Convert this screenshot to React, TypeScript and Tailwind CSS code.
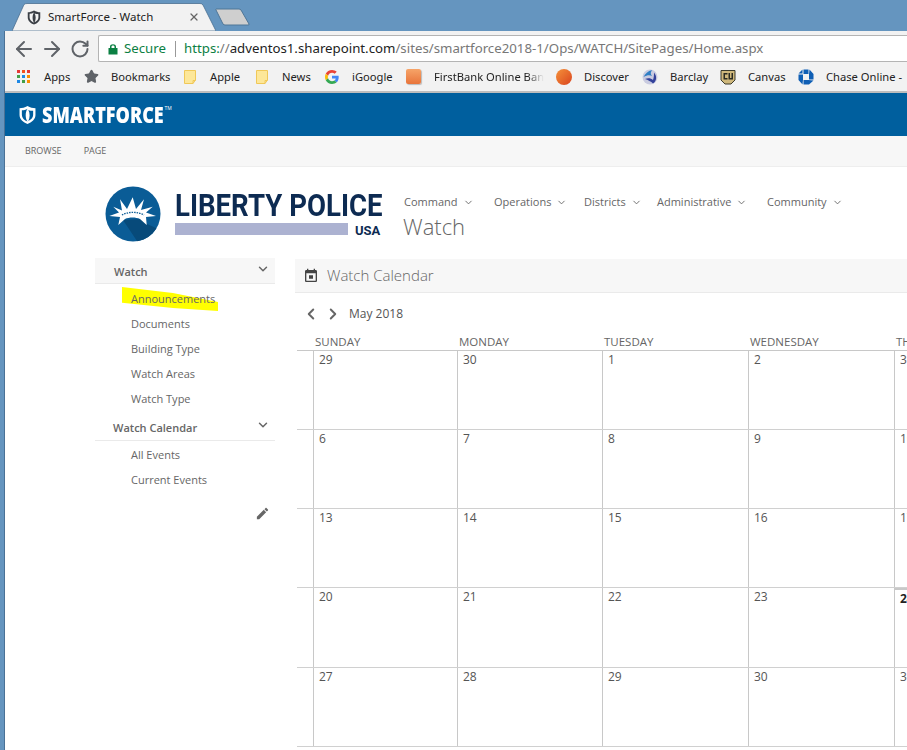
import { ArrowLeft, ArrowRight, ChevronDown, ChevronLeft, ChevronRight, RotateCw, Star, X } from "lucide-react";

const uiFont = "[font-family:'Open_Sans','Noto_Sans',sans-serif]";

function ShieldIcon({ className, fg, bg }: { className: string; fg: string; bg: string }) {
  return (
    <svg viewBox="0 0 16 18" className={className}>
      <path d="M8 0.5 C5.5 2 3 2.6 0.5 2.6 V9 C0.5 13 4 16 8 17.5 C12 16 15.5 13 15.5 9 V2.6 C13 2.6 10.5 2 8 0.5 Z" fill={fg} />
      <path d="M8 3 C6.4 3.9 4.6 4.5 2.7 4.6 V9 C2.7 11.7 5 14 8 15.2 C5.8 12 5.8 6 8 3 Z" fill={bg} />
      <path d="M8.8 4.2 C10 4.9 11.8 4.9 13.3 5 V9 C13.3 11.3 11.4 13.4 8.8 14.6 C10.4 11.5 10.4 7 8.8 4.2 Z" fill={bg} />
    </svg>
  );
}

function PageIcon() {
  return (
    <svg viewBox="0 0 12 14" className="h-[14px] w-[12px]">
      <path d="M0.5 0.5 H11.5 V10 L9 13.5 H0.5 Z" fill="#fde799" stroke="#f0c858" />
      <path d="M9 13.5 V10.5 H11.5" fill="none" stroke="#f0c858" />
    </svg>
  );
}

function AppsIcon() {
  const colors = ["#e53935", "#f4511e", "#e53935", "#43a047", "#1e88e5", "#fb8c00", "#1e88e5", "#43a047", "#fb8c00"];
  return (
    <div className="grid h-[13px] w-[13px] grid-cols-3 gap-[2px]">
      {colors.map((c, i) => (
        <span key={i} style={{ background: c }} />
      ))}
    </div>
  );
}

function GoogleIcon() {
  return (
    <svg viewBox="0 0 48 48" className="h-[14px] w-[14px]">
      <path fill="#EA4335" d="M24 9.5c3.5 0 6.7 1.2 9.2 3.6l6.9-6.9C35.9 2.4 30.5 0 24 0 14.6 0 6.5 5.4 2.6 13.2l8 6.2C12.5 13.7 17.800 9.5 24 9.5z" />
      <path fill="#4285F4" d="M46.900 24.500c0-1.600-.1-3.100-.4-4.500H24v9h12.900c-.6 3-2.200 5.500-4.800 7.200l7.700 6c4.500-4.200 7.100-10.300 7.100-17.700z" />
      <path fill="#FBBC05" d="M10.500 28.600c-.5-1.400-.8-3-.8-4.600s.3-3.200.8-4.600l-8-6.200C.9 16.400 0 20.100 0 24s.9 7.600 2.600 10.800l7.900-6.200z" />
      <path fill="#34A853" d="M24 48c6.500 0 11.900-2.100 15.900-5.800l-7.700-6c-2.100 1.400-4.900 2.300-8.200 2.300-6.200 0-11.500-4.200-13.400-9.900l-8 6.200C6.500 42.600 14.600 48 24 48z" />
    </svg>
  );
}

function FirstBankIcon() {
  return <div className="h-[15px] w-[15px] rounded-[2px] bg-gradient-to-b from-[#f6a468] to-[#e8743a] shadow-[1px_1px_1px_#bbb]" />;
}

function DiscoverIcon() {
  return <div className="h-[16px] w-[16px] rounded-full bg-gradient-to-br from-[#f4903a] to-[#d9411e]" />;
}

function BarclayIcon() {
  return (
    <svg viewBox="0 0 16 16" className="h-[16px] w-[16px]">
      <circle cx="8" cy="8" r="7.500" fill="#c9cbe0" />
      <path d="M10 1 C6 2 3 5 1.500 8 C5 6 8 6 10 7 C8 4.500 9 3 10 1 Z" fill="#2f7fc4" />
      <path d="M3 10 C6 8.500 9 9 11 11 C12 8 12 6 12 3.500 C15 7 15 12 11 14.500 C9 12.500 6 11 3 10 Z" fill="#33419a" />
    </svg>
  );
}

function CanvasIcon() {
  return (
    <svg viewBox="0 0 16 16" className="h-[16px] w-[16px]">
      <path d="M1 1.500 H15 V11 L11 15 H5 L1 11 Z" fill="#cfb87c" stroke="#3a3a2c" />
      <path d="M3.500 4 H7.500 V5.500 H5 V9 H7.500 V10.500 H3.500 Z" fill="#2b2b22" />
      <path d="M8.500 4 H10 V9 H11.500 V4 H13 V10.500 H8.500 Z" fill="#2b2b22" />
    </svg>
  );
}

function ChaseIcon() {
  return (
    <svg viewBox="0 0 16 16" className="h-[16px] w-[16px] shrink-0">
      <path d="M5.500 0.500 H10.500 V5 H5.500 Z M11.500 0.500 L15.500 5 V10.500 H11 V5 Z M15.500 11.500 L11 15.500 H5.500 V11 H10.500 Z M4.500 15.500 L0.500 11 V5.500 H5 V11 Z M0.500 4.500 L4.500 0.500 V4.500 Z" fill="#0f5fb5" />
    </svg>
  );
}

function CrownLogo() {
  return (
    <svg viewBox="0 0 56 56" className="h-[56px] w-[56px] shrink-0">
      <defs>
        <clipPath id="disc">
          <circle cx="28" cy="28" r="27.500" />
        </clipPath>
      </defs>
      <circle cx="28" cy="28" r="27.500" fill="#0a5c96" />
      <path d="M18 34 L36 33 L42 38 L60 46 L50 60 L34 58 Z" fill="#074a7a" clipPath="url(#disc)" />
      <path d="M4.300 30 L14 26.500 L8.300 20.700 L17 24.500 L15 13.300 L22 23 L27.700 11.300 L31 23 L39 13.300 L36 24 L47.700 20.700 L41 26.500 L51 30 L41 31 L41.700 39 L35 33 C31 31 24 31 20 33 L13.300 39 L15 31 Z" fill="#ffffff" />
      <path d="M17 29 C23 25.500 33 25.500 39 29" fill="none" stroke="#0a5c96" strokeWidth="1.300" strokeDasharray="1.500 1" />
    </svg>
  );
}

function Toolbar() {
  return (
    <div className="flex h-[32px] shrink-0 items-center bg-[#f2f2f2] pt-[3px] pl-[7px]">
      <ArrowLeft className="h-[24px] w-[24px] text-[#5f6368]" strokeWidth={2} />
      <ArrowRight className="ml-[4px] h-[24px] w-[24px] text-[#5f6368]" strokeWidth={2} />
      <RotateCw className="ml-[6px] h-[20px] w-[20px] text-[#5f6368]" strokeWidth={2.4} />
      <div className="ml-[8px] flex h-[27px] flex-1 items-center rounded-l-[2px] border border-r-0 border-[#b4b4b4] bg-white pl-[9px] text-[13.250px] whitespace-nowrap [font-family:'Noto_Sans','Open_Sans',sans-serif]">
        <svg viewBox="0 0 10 12" className="h-[12px] w-[10px]">
          <path d="M2 5 V3.500 C2 0.500 8 0.500 8 3.500 V5 H9.500 V11.500 H0.500 V5 Z M3.500 5 H6.500 V3.500 C6.500 2 3.500 2 3.500 3.500 Z" fill="#0b8043" fillRule="evenodd" />
        </svg>
        <span className="ml-[6px] text-[#0b8043]">Secure</span>
        <span className="ml-[9px] h-[16px] w-px bg-[#999]" />
        <span className="ml-[8px] text-[#0b8043]">https:</span>
        <span className="text-[#777]">//</span>
        <span className="text-[#222]">adventos1.sharepoint.com</span>
        <span className="text-[#777]">/sites/smartforce2018-1/Ops/WATCH/SitePages/Home.aspx</span>
      </div>
    </div>
  );
}

const bookmarks = [
  { label: "Apps", icon: <AppsIcon />, box: "w-[67px]", gap: "ml-[14px]" },
  { label: "Bookmarks", icon: <Star className="h-[15px] w-[15px] fill-[#5f6368] text-[#5f6368]" />, box: "w-[100px]", gap: "ml-[12px]" },
  { label: "Apple", icon: <PageIcon />, box: "w-[72px]", gap: "ml-[14px]" },
  { label: "News", icon: <PageIcon />, box: "w-[69px]", gap: "ml-[14px]" },
  { label: "iGoogle", icon: <GoogleIcon />, box: "w-[81px]", gap: "ml-[13px]" },
  { label: "FirstBank Online Banking", icon: <FirstBankIcon />, box: "w-[150px]", gap: "ml-[13px] w-[110px] overflow-hidden [mask-image:linear-gradient(to_right,black_85%,transparent)]" },
  { label: "Discover", icon: <DiscoverIcon />, box: "w-[86px]", gap: "ml-[12px]" },
  { label: "Barclay", icon: <BarclayIcon />, box: "w-[78px]", gap: "ml-[12px]" },
  { label: "Canvas", icon: <CanvasIcon />, box: "w-[78px]", gap: "ml-[12px]" },
  { label: "Chase Online -", icon: <ChaseIcon />, box: "w-[105px]", gap: "ml-[12px]" },
];

function BookmarksBar() {
  return (
    <div className="flex h-[30px] shrink-0 items-center overflow-hidden border-b-2 border-[#bdbdbd] bg-[#f2f2f2] pl-[12px] text-[11.2px] text-[#222] [font-family:'Noto_Sans','Open_Sans',sans-serif]">
      {bookmarks.map((b) => (
        <div key={b.label} className={`flex shrink-0 items-center ${b.box}`}>
          {b.icon}
          <span className={`whitespace-nowrap ${b.gap}`}>{b.label}</span>
        </div>
      ))}
    </div>
  );
}

const navItems = [
  { label: "Command", box: "w-[90px]" },
  { label: "Operations", box: "w-[90px]" },
  { label: "Districts", box: "w-[73px]" },
  { label: "Administrative", box: "w-[110px]" },
  { label: "Community", box: "w-[90px]" },
];

function SiteHeader() {
  return (
    <div className="flex h-[91px] shrink-0 bg-white pt-[19px] pl-[100px]">
      <CrownLogo />
      <div className="ml-[14px] flex w-[215px] flex-col">
        <div className="mt-[8px] h-[24px] origin-left scale-x-[0.89] text-[31px] leading-[24px] font-bold whitespace-nowrap text-[#0d2b52] [font-family:Roboto,sans-serif]">
          LIBERTY POLICE
        </div>
        <div className="mt-[5px] flex items-start">
          <div className="h-[12px] w-[173px] bg-[#acb2d1]" />
          <span className="mt-[2px] ml-[7px] text-[13px] leading-[12px] font-bold text-[#0d2b52] [font-family:Roboto,sans-serif]">USA</span>
        </div>
      </div>
      <div className="ml-[14px] flex flex-col">
        <div className="mt-[7px] flex text-[11px] leading-[18px] text-[#666]">
          {navItems.map((n) => (
            <div key={n.label} className={`flex items-center ${n.box}`}>
              {n.label}
              <ChevronDown className="ml-[5px] h-[11px] w-[11px] text-[#666]" />
            </div>
          ))}
        </div>
        <div className="-ml-[1px] text-[22px] leading-[30px] font-light text-[#666]">Watch</div>
      </div>
    </div>
  );
}

function SideNav() {
  const first = ["Announcements", "Documents", "Building Type", "Watch Areas", "Watch Type"];
  const second = ["All Events", "Current Events"];
  return (
    <div className="w-[180px] shrink-0 text-[11px] text-[#666]">
      <div className="flex h-[26px] items-center justify-between border-b border-[#eaeaea] bg-[#f7f7f7] pt-[3px] pr-[5px] pl-[19px] font-semibold">
        <span>Watch</span>
        <ChevronDown className="mb-[6px] h-[14px] w-[14px]" strokeWidth={2.5} />
      </div>
      <div className="flex flex-col pt-[3px] pl-[36px]">
        {first.map((item) => (
          <div key={item} className="relative flex h-[25px] items-center">
            {item === "Announcements" && (
              <div className="absolute top-[0px] left-[-9px] h-[24px] w-[96px] bg-[#ffff00] [clip-path:polygon(0_0,53%_25%,100%_62%,100%_100%,53%_88%,0_66%)]" />
            )}
            <span className="relative">{item}</span>
          </div>
        ))}
      </div>
      <div className="mt-[4px] flex h-[25px] items-center justify-between border-b border-[#eaeaea] pr-[5px] pl-[18px] font-semibold">
        <span>Watch Calendar</span>
        <ChevronDown className="mb-[6px] h-[14px] w-[14px]" strokeWidth={2.5} />
      </div>
      <div className="flex flex-col pt-[2px] pl-[36px]">
        {second.map((item) => (
          <div key={item} className="flex h-[25px] items-center">
            {item}
          </div>
        ))}
      </div>
      <div className="mt-[13px] flex justify-end pr-[5px]">
        <svg viewBox="0 0 24 24" className="h-[15px] w-[15px] fill-[#666]">
          <path d="M3 17.250V21h3.750L17.810 9.940l-3.750-3.750L3 17.250zM20.710 7.040c.39-.39.39-1.020 0-1.410l-2.340-2.340c-.39-.39-1.020-.39-1.410 0l-1.830 1.830 3.750 3.750 1.830-1.830z" />
        </svg>
      </div>
    </div>
  );
}

const days = ["SUNDAY", "MONDAY", "TUESDAY", "WEDNESDAY", "THURSDAY"];
const weeks = [
  ["29", "30", "1", "2", "3"],
  ["6", "7", "8", "9", "10"],
  ["13", "14", "15", "16", "17"],
  ["20", "21", "22", "23", "24"],
  ["27", "28", "29", "30", "31"],
];
const rowGrid = "grid grid-cols-[16px_144px_145px_146px_146px_160px]";

function Calendar() {
  return (
    <div className="mt-[1px] min-w-0 flex-1">
      <div className="flex h-[34px] items-center border-b border-[#eaeaea] bg-[#f7f7f7] pl-[8px]">
        <svg viewBox="0 0 24 24" className="h-[16px] w-[16px] fill-[#444]">
          <path d="M19 3h-1V1h-2v2H8V1H6v2H5c-1.110 0-2 .9-2 2v14c0 1.100.89 2 2 2h14c1.100 0 2-.9 2-2V5c0-1.100-.9-2-2-2zm0 16H5V8h14v11zM9 11h6v5H9z" />
        </svg>
        <span className="ml-[8px] text-[15px] font-light text-[#666]">Watch Calendar</span>
      </div>
      <div className="flex h-[41px] items-center pl-[7px] text-[#666]">
        <ChevronLeft className="h-[18px] w-[18px]" strokeWidth={2.6} />
        <ChevronRight className="ml-[4px] h-[18px] w-[18px]" strokeWidth={2.6} />
        <span className="ml-[7px] text-[12px] text-[#555]">May 2018</span>
      </div>
      <div className="ml-[2px] w-[700px]">
        <div className={`${rowGrid} h-[17px] border-b border-[#c8c8c8] text-[11.500px] leading-[15px] text-[#666]`}>
          <div />
          {days.map((d) => (
            <div key={d} className="pl-[2px]">
              {d}
            </div>
          ))}
        </div>
        {weeks.map((week, w) => (
          <div key={w} className={`${rowGrid} ${w === 3 ? "h-[80px]" : "h-[79px]"} border-b border-[#d0d0d0] text-[12px] text-[#555]`}>
            <div />
            {week.map((day, i) => (
              <div key={i} className={`border-l border-[#c8c8c8] pl-[5px] ${w === 3 && i === 4 ? "border-t-2 font-bold text-[#222]" : ""}`}>
                {day}
              </div>
            ))}
          </div>
        ))}
      </div>
    </div>
  );
}

export default function App() {
  return (
    <div className={`flex h-[750px] w-[907px] flex-col overflow-hidden bg-[#6595bf] ${uiFont}`}>
      <div className="flex h-[31px] shrink-0 items-end pl-[5px]">
        <div className="relative ml-[7px] flex h-[28px] w-[204px] items-center pr-[16px] pl-[15px]">
          <svg viewBox="0 0 204 28" className="absolute inset-0 h-full w-full">
            <path d="M0 28 L12 1.500 Q13 0.500 15 0.500 H188 Q190 0.500 191 2 L204 28 Z" fill="#f2f2f2" stroke="#4a6f90" strokeWidth="0.800" />
          </svg>
          <ShieldIcon className="relative h-[15px] w-[14px]" fg="#3a3f45" bg="#f2f2f2" />
          <span className="relative ml-[7px] flex-1 text-[11.500px] whitespace-nowrap text-[#222] [font-family:'Noto_Sans','Open_Sans',sans-serif]">SmartForce - Watch</span>
          <X className="relative h-[12px] w-[12px] text-[#666]" strokeWidth={2.5} />
        </div>
        <svg viewBox="0 0 36 18" className="mb-[5px] -ml-[1px] h-[18px] w-[36px]">
          <path d="M1 1 H24 Q25 1 26 2 L34 16 Q34.500 17 33 17 H10 Q9 17 8 16 L1 2 Q0.500 1 1 1 Z" fill="#cfcfcf" stroke="#4f7697" />
        </svg>
      </div>
      <div className="ml-[4px] flex min-h-0 flex-1 flex-col border-l border-[#4a7196] bg-white">
        <Toolbar />
        <BookmarksBar />
        <div className="flex h-[43px] shrink-0 items-center bg-[#005f9e] pl-[14px] text-white">
          <ShieldIcon className="h-[20px] w-[17px]" fg="#ffffff" bg="#005f9e" />
          <span className="ml-[6px] origin-left scale-x-[0.82] text-[22px] font-extrabold whitespace-nowrap">SMARTFORCE</span>
          <span className="-ml-[26px] mb-[12px] text-[5px]">TM</span>
        </div>
        <div className="flex h-[31px] shrink-0 items-center gap-[22px] border-b border-[#eeeeee] bg-[#f7f7f7] pl-[20px] text-[9px] text-[#666]">
          <span>BROWSE</span>
          <span>PAGE</span>
        </div>
        <SiteHeader />
        <div className="flex gap-[20px] pl-[90px]">
          <SideNav />
          <Calendar />
        </div>
      </div>
    </div>
  );
}
